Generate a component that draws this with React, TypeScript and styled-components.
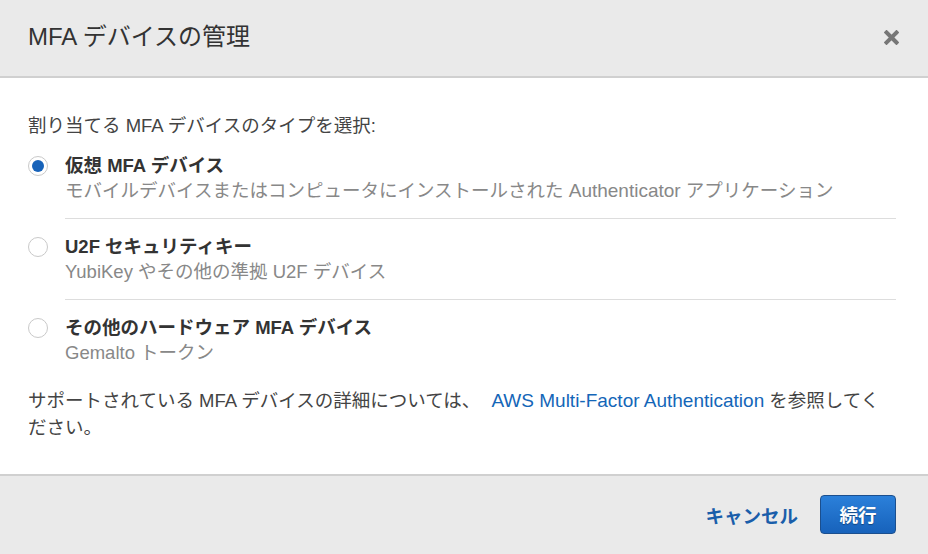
import React, { useState } from "react";
import styled, { createGlobalStyle } from "styled-components";

const GlobalStyle = createGlobalStyle`
  html, body { margin: 0; padding: 0; background: #ffffff; }
  body { font-family: "Liberation Sans", "Noto Sans CJK JP", sans-serif; }
  * { box-sizing: border-box; }
`;

const Dialog = styled.div`
  width: 928px;
  height: 554px;
  display: flex;
  flex-direction: column;
  background: #ffffff;
`;

const Header = styled.header`
  height: 78px;
  flex: none;
  display: flex;
  align-items: center;
  justify-content: space-between;
  padding: 0 29px 2px 28px;
  background: #eaeaea;
  border-bottom: 2px solid #d0d0d0;
`;

const Title = styled.h1`
  margin: 0;
  font-size: 24px;
  font-weight: 400;
  color: #333333;
  line-height: 30px;
`;

const CloseButton = styled.button`
  width: 15px;
  height: 15px;
  padding: 0;
  border: none;
  background: transparent;
  display: flex;
  cursor: pointer;
`;

const Body = styled.main`
  flex: 1;
  padding: 35px 32px 0 28px;
  font-size: 18.5px;
  color: #444444;
`;

const Prompt = styled.p`
  margin: 0;
  line-height: 25px;
`;

const OptionList = styled.div`
  display: flex;
  flex-direction: column;
`;

const OptionRow = styled.label`
  display: flex;
  cursor: pointer;
`;

const RadioCell = styled.span`
  width: 37px;
  flex: none;
  padding-top: 17.5px;
`;

const RadioCircle = styled.span<{ $checked: boolean }>`
  width: 20px;
  height: 20px;
  border-radius: 50%;
  border: 1px solid #c9c9c9;
  background: #ffffff;
  display: flex;
  align-items: center;
  justify-content: center;
  &::after {
    content: "";
    width: 12px;
    height: 12px;
    border-radius: 50%;
    background: ${(p) => (p.$checked ? "#1762b9" : "transparent")};
  }
`;

const OptionText = styled.span<{ $last: boolean }>`
  flex: 1;
  display: flex;
  flex-direction: column;
  padding: 15px 0;
  border-bottom: ${(p) => (p.$last ? "none" : "1px solid #dddddd")};
`;

const OptionLabel = styled.span`
  font-weight: 700;
  color: #333333;
  line-height: 25px;
`;

const OptionDesc = styled.span`
  color: #888888;
  line-height: 25px;
`;

const Latin = styled.span`
  font-size: 19px;
`;

const Info = styled.p`
  margin: 7px 2px 0 0;
  line-height: 27px;
`;

const Link = styled.a`
  margin-left: 6px;
  font-size: 19px;
  color: #1466b8;
  text-decoration: none;
`;

const Footer = styled.footer`
  height: 80px;
  flex: none;
  display: flex;
  align-items: center;
  justify-content: flex-end;
  gap: 22px;
  padding: 0 32px 0 28px;
  background: #eaeaea;
  border-top: 2px solid #d0d0d0;
`;

const CancelButton = styled.button`
  border: none;
  background: transparent;
  padding: 0;
  font-family: inherit;
  font-size: 18.5px;
  font-weight: 700;
  color: #1a5eaa;
  cursor: pointer;
`;

const PrimaryButton = styled.button`
  width: 76px;
  height: 39px;
  border: 1px solid #1b4f8e;
  border-radius: 4px;
  background: linear-gradient(#2b80da, #1762bb);
  font-family: inherit;
  font-size: 18.5px;
  font-weight: 700;
  color: #ffffff;
  text-shadow: 0 1px 1px rgba(0, 0, 0, 0.35);
  cursor: pointer;
  margin-top: -2px;
`;

const options = [
  {
    id: "virtual",
    label: "仮想 MFA デバイス",
    desc: (
      <>
        モバイルデバイスまたはコンピュータにインストールされた <Latin>Authenticator</Latin> アプリケーション
      </>
    ),
  },
  { id: "u2f", label: "U2F セキュリティキー", desc: <>YubiKey やその他の準拠 U2F デバイス</> },
  { id: "hw", label: "その他のハードウェア MFA デバイス", desc: <>Gemalto トークン</> },
];

export default function App() {
  const [selected, setSelected] = useState("virtual");
  return (
    <>
      <GlobalStyle />
      <Dialog>
        <Header>
          <Title>MFA デバイスの管理</Title>
          <CloseButton aria-label="close">
            <svg width="15" height="15" viewBox="0 0 15 15">
              <path d="M2.5 2.5 L12.5 12.5 M12.5 2.5 L2.5 12.5" stroke="#777777" strokeWidth="4" strokeLinecap="square" />
            </svg>
          </CloseButton>
        </Header>
        <Body>
          <Prompt>割り当てる MFA デバイスのタイプを選択:</Prompt>
          <OptionList>
            {options.map((o, i) => (
              <OptionRow key={o.id} onClick={() => setSelected(o.id)}>
                <RadioCell>
                  <RadioCircle $checked={selected === o.id} />
                </RadioCell>
                <OptionText $last={i === options.length - 1}>
                  <OptionLabel>{o.label}</OptionLabel>
                  <OptionDesc>{o.desc}</OptionDesc>
                </OptionText>
              </OptionRow>
            ))}
          </OptionList>
          <Info>
            サポートされている MFA デバイスの詳細については、 <Link href="#">AWS Multi-Factor Authentication</Link> を参照してください。
          </Info>
        </Body>
        <Footer>
          <CancelButton>キャンセル</CancelButton>
          <PrimaryButton>続行</PrimaryButton>
        </Footer>
      </Dialog>
    </>
  );
}
